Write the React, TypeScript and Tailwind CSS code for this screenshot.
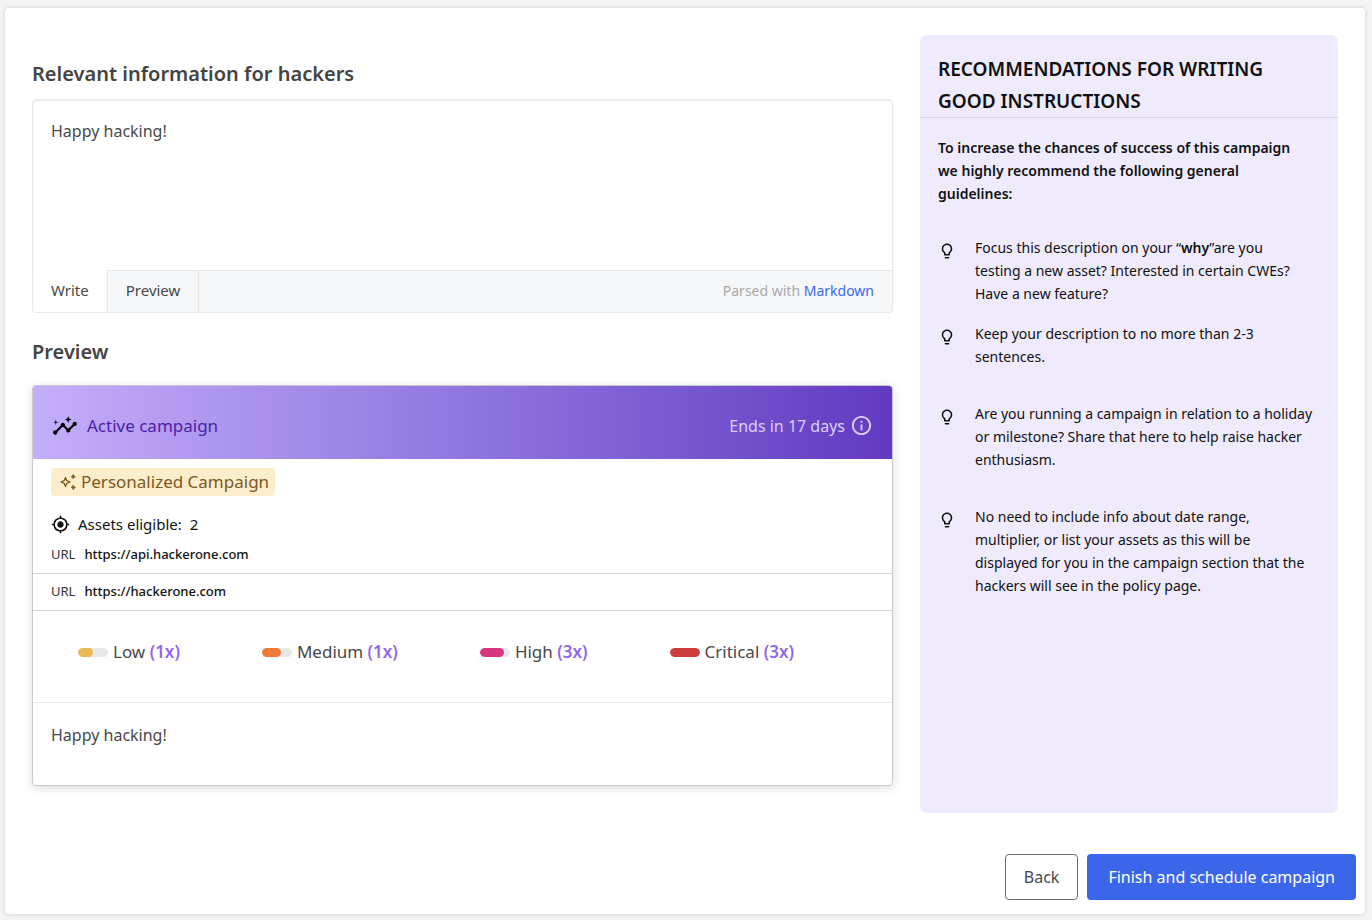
import React, { useState } from "react";
import { MdGpsFixed, MdInfoOutline, MdInsights, MdLightbulbOutline } from "react-icons/md";

const severities = [
  { name: "Low", multiplier: "(1x)", fill: "w-1/2 bg-[#ecb955]" },
  { name: "Medium", multiplier: "(1x)", fill: "w-[62%] bg-[#ee7a3a]" },
  { name: "High", multiplier: "(3x)", fill: "w-[82%] bg-[#d5367c]" },
  { name: "Critical", multiplier: "(3x)", fill: "w-full bg-[#ce3b3b]" },
];

const assets = ["https://api.hackerone.com", "https://hackerone.com"];

const tips: { text: React.ReactNode; space: string }[] = [
  {
    text: (
      <>
        Focus this description on your “<strong className="font-semibold">why</strong>”are you
        <br />
        testing a new asset? Interested in certain CWEs? Have a new feature?
      </>
    ),
    space: "mb-[17px]",
  },
  { text: "Keep your description to no more than 2-3 sentences.", space: "mb-[34px]" },
  {
    text: "Are you running a campaign in relation to a holiday or milestone? Share that here to help raise hacker enthusiasm.",
    space: "mb-[34px]",
  },
  {
    text: "No need to include info about date range, multiplier, or list your assets as this will be displayed for you in the campaign section that the hackers will see in the policy page.",
    space: "",
  },
];

function SparkleIcon() {
  return (
    <svg viewBox="0 0 18 18" className="size-[18px]" fill="none" aria-hidden="true">
      <path
        d="M6.5 4.4 7.8 7.7 11.1 9 7.8 10.3 6.5 13.6 5.2 10.3 1.9 9 5.2 7.7Z"
        stroke="currentColor"
        strokeWidth="1.3"
        strokeLinejoin="round"
      />
      <path
        d="m14.2 1.4.7 1.5 1.5.7-1.5.7-.7 1.5-.7-1.5-1.5-.7 1.5-.7Zm0 10.8.7 1.5 1.5.7-1.5.7-.7 1.5-.7-1.5-1.5-.7 1.5-.7Z"
        fill="currentColor"
        stroke="currentColor"
        strokeWidth=".8"
        strokeLinejoin="round"
      />
    </svg>
  );
}

function Editor() {
  const [value, setValue] = useState("Happy hacking!");
  return (
    <div className="overflow-hidden rounded-[4px] border border-[#e8e8e8] shadow-[inset_0_1px_2px_rgba(0,0,0,0.08)]">
      <textarea
        id="info"
        value={value}
        onChange={(e) => setValue(e.target.value)}
        className="block h-[170px] w-full resize-none bg-transparent px-[18px] py-[19px] text-[16px] leading-6 outline-none"
      />
      <div className="flex h-[42px] items-stretch bg-[#f6f7f9] text-[15px]">
        <button type="button" className="bg-white px-[18px] pb-0.5">
          Write
        </button>
        <button type="button" className="border-x border-t border-[#e8e8e8] px-[18px] pb-0.5">
          Preview
        </button>
        <p className="flex-1 border-t border-[#e8e8e8] px-[18px] text-right text-[14px] leading-[40px] text-[#a9a9a9]">
          Parsed with{" "}
          <a href="#markdown" className="text-[#3c66ec]">
            Markdown
          </a>
        </p>
      </div>
    </div>
  );
}

function CampaignCard() {
  return (
    <article className="overflow-hidden rounded-[4px] border border-[#c8c8d0] shadow-[0_2px_10px_rgba(0,0,0,0.14)]">
      <header className="flex h-[73px] items-center justify-between bg-linear-to-r from-[#c5aefa] to-[#6239c1] px-[19px] pt-1.5">
        <h3 className="flex items-center gap-[9px] text-[17px] text-[#4b1fa8]">
          <MdInsights className="size-[26px] text-black" />
          Active campaign
        </h3>
        <p className="flex items-center gap-[5px] text-[16px] text-[#dccffb]">
          Ends in 17 days
          <MdInfoOutline className="size-[23px]" />
        </p>
      </header>
      <div className="px-[18px] pt-[9px]">
        <span className="inline-flex h-7 items-center gap-1 rounded-[4px] bg-[#fcedcd] pr-[6px] pl-[8px] text-[17px] text-[#7d591d]">
          <SparkleIcon />
          Personalized Campaign
        </span>
      </div>
      <p className="mt-[15px] flex h-[25px] items-center gap-2 px-[18px] text-[15px] text-[#111]">
        <MdGpsFixed className="size-[19px]" />
        Assets eligible:
        <span>2</span>
      </p>
      <ul>
        {assets.map((asset) => (
          <li
            key={asset}
            className="flex h-[37px] items-center gap-[9px] border-b border-[#d6d7da] px-[18px] text-[13px] text-[#111]"
          >
            <span className="text-[#333]">URL</span>
            <span className="font-medium">{asset}</span>
          </li>
        ))}
      </ul>
      <ul className="flex h-[92px] justify-between border-b border-[#e8e8ea] pt-[29px] pr-[98px] pl-[45px] text-[17px] leading-6">
        {severities.map((s) => (
          <li key={s.name} className="flex h-6 items-center gap-[5px]">
            <span className="flex h-[9px] w-[30px] overflow-hidden rounded-full bg-[#e8e8e8]">
              <span className={`rounded-full ${s.fill}`} />
            </span>
            <span>
              {s.name} <b className="font-semibold text-[#8f67ee]">{s.multiplier}</b>
            </span>
          </li>
        ))}
      </ul>
      <p className="px-[18px] pt-5 pb-[38px] text-[16px] leading-6">Happy hacking!</p>
    </article>
  );
}

export default function App() {
  return (
    <div className="min-h-screen bg-[#f4f4f4] pt-2 pr-[7px] pb-[7px] pl-[5px] font-['Noto_Sans',sans-serif] text-[#484848]">
      <main className="rounded-[4px] bg-white px-[9px] pb-[14px] shadow-[0_0_4px_rgba(0,0,0,0.15)]">
        <div className="flex items-start gap-[27px] px-[18px] pt-[27px]">
          <section className="min-w-0 flex-1 pt-[25px]">
            <label htmlFor="info" className="block pb-[11px] text-[20px] leading-7 font-semibold text-[#444]">
              Relevant information for hackers
            </label>
            <Editor />
            <h2 className="pt-[25px] pb-[19px] text-[20px] leading-7 font-semibold text-[#444]">Preview</h2>
            <CampaignCard />
          </section>
          <aside className="min-h-[778px] w-[418px] shrink-0 rounded-[7px] bg-[#efebfd] text-[#111]">
            <h2 className="border-b border-[#d9d4e4] px-[18px] pt-[18px] text-[19px] leading-8 font-semibold">
              RECOMMENDATIONS FOR WRITING GOOD INSTRUCTIONS
            </h2>
            <p className="pt-[18px] pr-9 pl-[18px] text-[14px] leading-[23px] font-semibold">
              To increase the chances of success of this campaign we highly recommend the following general guidelines:
            </p>
            <ul className="pt-[31px] pr-6 pl-[18px] text-[14px] leading-[23px]">
              {tips.map((tip, i) => (
                <li key={i} className={`flex gap-[19px] ${tip.space}`}>
                  <MdLightbulbOutline className="mt-1.5 size-[18px] shrink-0" />
                  <p>{tip.text}</p>
                </li>
              ))}
            </ul>
          </aside>
        </div>
        <footer className="flex justify-end gap-[9px] pt-[41px] text-[16px]">
          <button type="button" className="h-[46px] rounded-[4px] border border-[#6b6b78] px-[18px]">
            Back
          </button>
          <button type="button" className="h-[46px] rounded-[4px] bg-[#3c66ea] px-[21px] text-white">
            Finish and schedule campaign
          </button>
        </footer>
      </main>
    </div>
  );
}
